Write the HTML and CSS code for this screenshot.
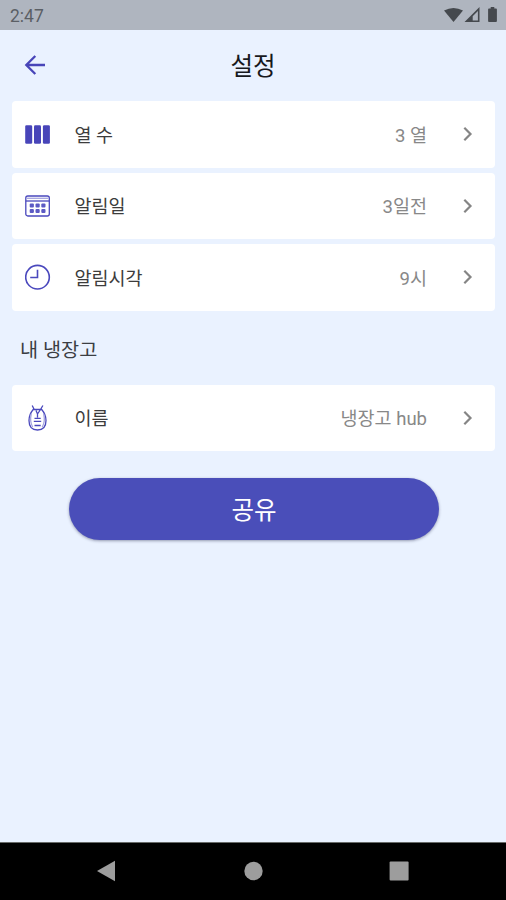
FILE: index.html
```html
<!DOCTYPE html>
<html lang="ko">
<head>
<meta charset="utf-8">
<title>설정</title>
<link rel="stylesheet" href="styles.css">
</head>
<body>
<div class="screen">
  <div class="status">
    <span class="time">2:47</span>
    <svg class="status-icons" width="64" height="18" viewBox="0 0 64 18">
      <path d="M7 4.600Q16.500-.8 26 4.600L16.500 15.900Z"/>
      <path fill-rule="evenodd" d="M42.500 1V16H27.500ZM40.900 5L35.700 10.200V14.500H40.900Z"/>
      <path d="M52 2.500H53.700V.9H57.300V2.500H59q.9 0 .9.900V15.100q0 .9-.9.9H52q-.9 0-.9-.9V3.400q0-.9.9-.9Z"/>
    </svg>
  </div>
  <header class="header">
    <svg class="back" width="22" height="22" viewBox="0 0 22 22"><path d="M21 11H2.500M11.300 2L2.300 11L11.300 20"/></svg>
    <h1 class="title">설정</h1>
  </header>
  <main class="content">
    <div class="list">
      <div class="row">
        <svg class="icon" width="26" height="26" viewBox="0 0 26 26"><g class="solid"><rect x=".2" y="4.300" width="7" height="18.500" rx="1.300"/><rect x="9" y="4.300" width="7" height="18.500" rx="1.300"/><rect x="17.900" y="4.300" width="7" height="18.500" rx="1.300"/></g></svg>
        <span class="label">열 수</span><span class="value">3 열</span>
        <svg class="chevron" width="10" height="16" viewBox="0 0 10 16"><path d="M1.300 1.800L7.500 8L1.300 14.200"/></svg>
      </div>
      <div class="row">
        <svg class="icon thin" width="26" height="26" viewBox="0 0 26 26"><rect x=".8" y="3" width="23.500" height="20" rx="2"/><path class="pale" d="M1.800 5.300H23.300"/><path d="M.8 8H24.300"/><g class="dots"><rect x="4.700" y="10.600" width="4.200" height="4" rx="1"/><rect x="10.500" y="10.600" width="4.200" height="4" rx="1"/><rect x="16.300" y="10.600" width="4.200" height="4" rx="1"/><rect x="4.700" y="16" width="4.200" height="4" rx="1"/><rect x="10.500" y="16" width="4.200" height="4" rx="1"/><rect x="16.300" y="16" width="4.200" height="4" rx="1"/></g></svg>
        <span class="label">알림일</span><span class="value">3일전</span>
        <svg class="chevron" width="10" height="16" viewBox="0 0 10 16"><path d="M1.300 1.800L7.500 8L1.300 14.200"/></svg>
      </div>
      <div class="row">
        <svg class="icon" width="26" height="26" viewBox="0 0 26 26"><circle cx="12.500" cy="13.200" r="11.800"/><path d="M12.500 5.700V13.500H5.200"/></svg>
        <span class="label">알림시각</span><span class="value">9시</span>
        <svg class="chevron" width="10" height="16" viewBox="0 0 10 16"><path d="M1.300 1.800L7.500 8L1.300 14.200"/></svg>
      </div>
    </div>
    <h2 class="section">내 냉장고</h2>
    <div class="list">
      <div class="row">
        <svg class="icon thin" width="26" height="26" viewBox="0 0 26 26"><path d="M8.200 4.500H16.700Q21 9.500 21 15.500Q21 25 12.500 25Q4 25 4 15.500Q4 9.500 8.200 4.500ZM7.200 .5L9.200 4.500M17.900 .5L15.500 4.500L12.500 9L11 5.500M12.500 9V12.500M9.500 13.300H15.700M8.800 16.300H16.200M9.500 20.500H15.700"/><path class="pale" d="M6.200 9Q4.500 17 7.700 22M18.700 9Q20.500 17 17.200 22"/></svg>
        <span class="label">이름</span><span class="value">냉장고 hub</span>
        <svg class="chevron" width="10" height="16" viewBox="0 0 10 16"><path d="M1.300 1.800L7.500 8L1.300 14.200"/></svg>
      </div>
    </div>
    <button class="share">공유</button>
  </main>
  <nav class="nav">
    <svg width="20" height="22" viewBox="0 0 20 22"><path d="M1 11L19 .8V21.200Z"/></svg>
    <svg width="20" height="22" viewBox="0 0 20 22"><circle cx="10.500" cy="11" r="9.200"/></svg>
    <svg width="20" height="22" viewBox="0 0 20 22"><rect x=".6" y="1.600" width="19" height="19" rx="1"/></svg>
  </nav>
</div>
</body>
</html>
```
FILE: styles.css
```css
* { box-sizing: border-box; }
body {
  margin: 0;
  font-family: Roboto, "Noto Sans CJK KR", sans-serif;
  background: #eaf2ff;
}
svg { display: block; flex: none; }
.screen { display: flex; flex-direction: column; height: 900px; }
.status {
  display: flex;
  align-items: center;
  justify-content: space-between;
  height: 30px;
  padding: 0 5px 0 10px;
  background: #afb5bf;
  color: #5b5f65;
}
.time { font-size: 17.500px; line-height: 20px; padding-top: 2px; }
.status-icons { fill: #45494e; }
.header {
  display: grid;
  grid-template-columns: 22px 1fr 22px;
  align-items: center;
  height: 71px;
  padding: 0 24px 2px;
}
.back { fill: none; stroke: #4845b8; stroke-width: 2.300; }
.title {
  margin: 0;
  padding-top: 5px;
  font-size: 24.500px;
  font-weight: 400;
  line-height: 36px;
  text-align: center;
  color: #17191d;
}
.content { flex: 1; display: flex; flex-direction: column; padding: 0 11px 0 12px; }
.list { display: flex; flex-direction: column; gap: 5px; }
.row {
  display: flex;
  align-items: center;
  height: 66.500px;
  padding: 0 22px 0 13px;
  border-radius: 4px;
  background: #fff;
  font-size: 18.500px;
  line-height: 28px;
}
.icon { fill: none; stroke: #4a48bd; stroke-width: 1.600; }
.thin { stroke-width: 1.300; }
.solid, .dots { fill: #4845b9; stroke: none; }
.dots { fill: #5c5ac4; }
.pale { stroke: #a5a4e0; }
.label, .value { padding-top: 3px; }
.label { flex: 1; padding-left: 23.500px; color: #3c3c3c; }
.value { color: #888; margin-right: 36px; }
.chevron { fill: none; stroke: #858585; stroke-width: 2.200; }
.section {
  margin: 0;
  height: 74px;
  padding: 0 8px;
  font-size: 19.700px;
  font-weight: 400;
  line-height: 80px;
  color: #3b3e43;
}
.share {
  width: 370px;
  height: 62px;
  margin: 27px 0 0 57px;
  padding: 4px 0 0;
  border: 0;
  border-radius: 31px;
  background: #4a4eb9;
  box-shadow: 0 1px 3px rgba(40, 45, 80, .45);
  color: #fff;
  font: 24.500px/58px Roboto, "Noto Sans CJK KR", sans-serif;
}
.nav {
  display: flex;
  align-items: center;
  justify-content: space-between;
  height: 58.500px;
  padding: 0 97px 0 96px;
  border-top: 1px solid #686b69;
  background: #000;
  fill: #9d9d9d;
}
```
